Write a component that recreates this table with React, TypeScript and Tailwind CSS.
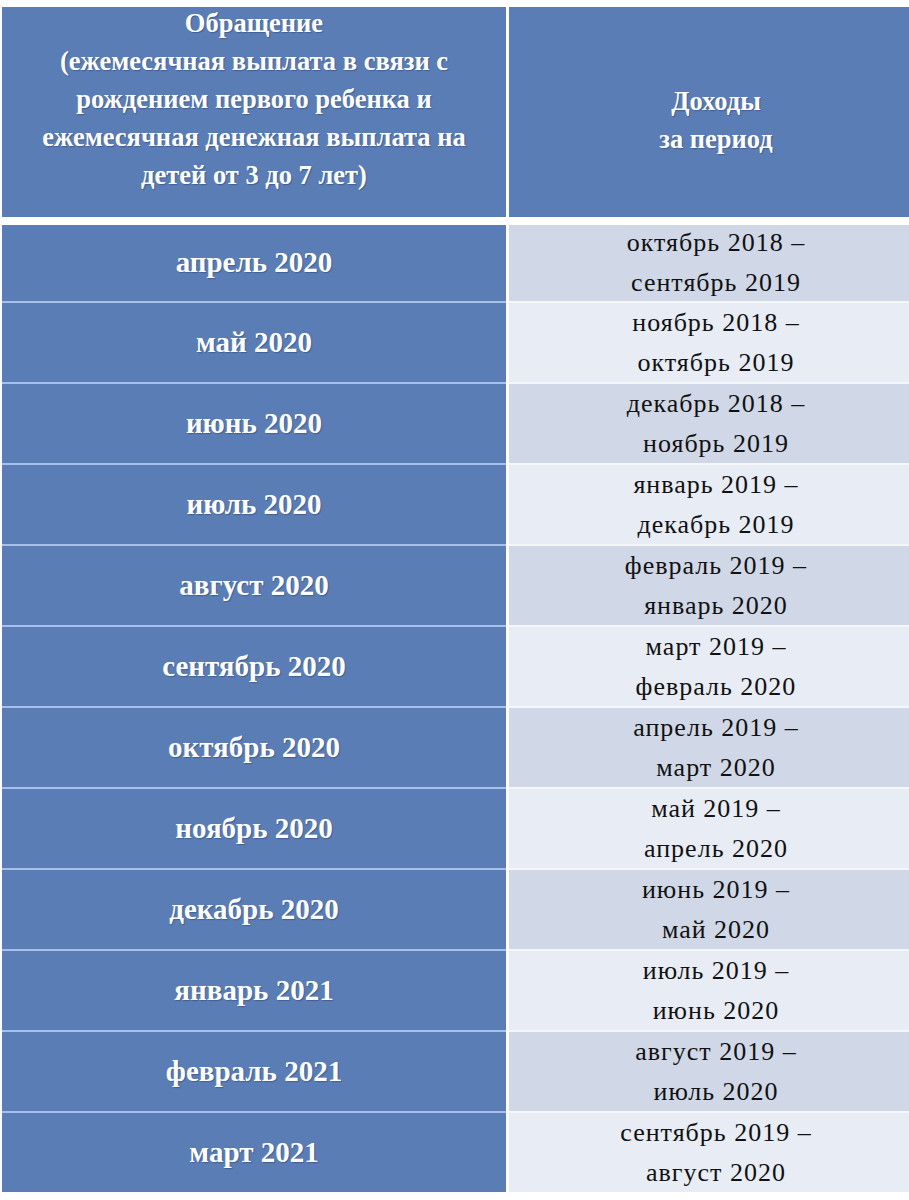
const rows: { month: string; from: string; to: string }[] = [
  { month: "апрель 2020", from: "октябрь 2018 –", to: "сентябрь 2019" },
  { month: "май 2020", from: "ноябрь 2018 –", to: "октябрь 2019" },
  { month: "июнь 2020", from: "декабрь 2018 –", to: "ноябрь 2019" },
  { month: "июль 2020", from: "январь 2019 –", to: "декабрь 2019" },
  { month: "август 2020", from: "февраль 2019 –", to: "январь 2020" },
  { month: "сентябрь 2020", from: "март 2019 –", to: "февраль 2020" },
  { month: "октябрь 2020", from: "апрель 2019 –", to: "март 2020" },
  { month: "ноябрь 2020", from: "май 2019 –", to: "апрель 2020" },
  { month: "декабрь 2020", from: "июнь 2019 –", to: "май 2020" },
  { month: "январь 2021", from: "июль 2019 –", to: "июнь 2020" },
  { month: "февраль 2021", from: "август 2019 –", to: "июль 2020" },
  { month: "март 2021", from: "сентябрь 2019 –", to: "август 2020" },
];

const serif = "font-['Liberation_Serif','Times_New_Roman',serif]";
const shadow = "[text-shadow:1px_1px_1px_rgba(20,40,80,0.35)]";

export default function App() {
  return (
    <div className={`min-h-[1200px] w-[909px] overflow-hidden bg-white pl-[2px] pt-[7px] ${serif}`}>
      <div className="grid grid-cols-[504px_1fr] gap-x-[3px]">
        <div
          className={`flex h-[210px] flex-col items-center justify-center bg-[#5a7db6] pb-[26px] text-center text-[26.5px] font-bold leading-[38px] text-white ${shadow}`}
        >
          <span>Обращение</span>
          <span>(ежемесячная выплата в связи с</span>
          <span>рождением первого ребенка и</span>
          <span>ежемесячная денежная выплата на</span>
          <span>детей от 3 до 7 лет)</span>
        </div>
        <div
          className={`flex h-[210px] flex-col items-center justify-center bg-[#5a7db6] pl-[14px] pt-[16px] text-center text-[26.5px] font-bold leading-[38px] text-white ${shadow}`}
        >
          <span>Доходы</span>
          <span>за период</span>
        </div>
      </div>

      <div className="mt-[8px] grid grid-cols-[504px_1fr] gap-x-[3px]">
        {rows.map((row, i) => (
          <div key={row.month} className="contents">
            <div
              className={`flex items-center justify-center bg-[#5a7db6] text-[29px] font-bold text-white ${shadow} ${
                i === 0 ? "h-[76px]" : "h-[81px] border-t-2 border-[#a6c0ea]"
              }`}
            >
              {row.month}
            </div>
            <div
              className={`flex flex-col items-center justify-center pl-[14px] text-[26px] leading-[40px] tracking-[1px] text-[#111] ${
                i % 2 === 0 ? "bg-[#d0d7e6]" : "bg-[#e8ecf4]"
              } ${i === 0 ? "h-[76px]" : "h-[81px] border-t-2 border-[#f4f6fa]"}`}
            >
              <span>{row.from}</span>
              <span>{row.to}</span>
            </div>
          </div>
        ))}
      </div>
    </div>
  );
}
